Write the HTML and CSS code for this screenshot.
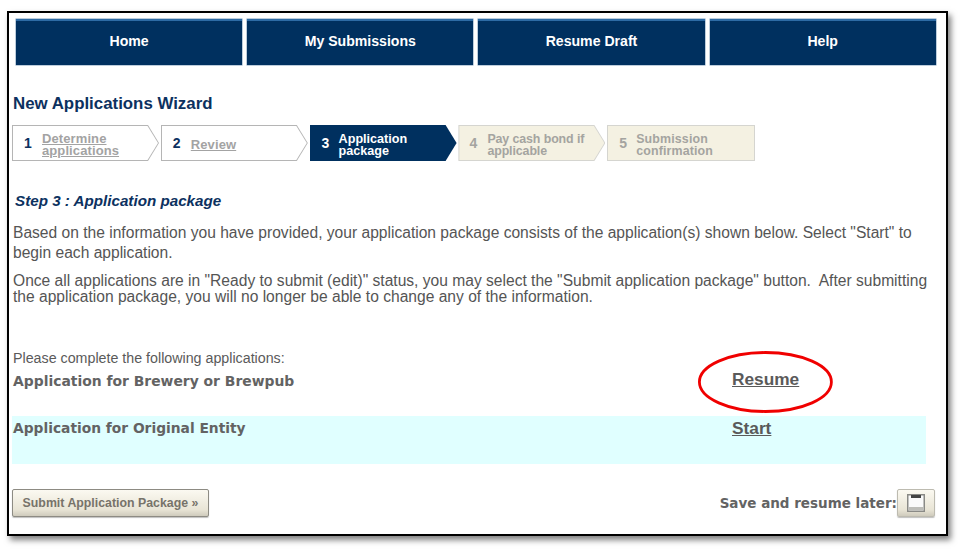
FILE: index.html
```html
<!DOCTYPE html>
<html lang="en">
<head>
<meta charset="utf-8">
<title>New Applications Wizard</title>
<link rel="stylesheet" href="styles.css">
</head>
<body>
<div class="frame">
  <nav class="nav">
    <a class="nav-item">Home</a>
    <a class="nav-item">My Submissions</a>
    <a class="nav-item">Resume Draft</a>
    <a class="nav-item">Help</a>
  </nav>
  <h1 class="title">New Applications Wizard</h1>
  <ol class="steps">
    <li class="step step-done"><div class="step-in"><span class="num">1</span><a class="label">Determine applications</a></div></li>
    <li class="step step-done"><div class="step-in"><span class="num">2</span><a class="label">Review</a></div></li>
    <li class="step step-current"><div class="step-in"><span class="num">3</span><span class="label">Application<br>package</span></div></li>
    <li class="step step-todo step-pay"><div class="step-in"><span class="num">4</span><span class="label">Pay cash bond if<br>applicable</span></div></li>
    <li class="step step-todo step-last"><div class="step-in"><span class="num">5</span><span class="label">Submission<br>confirmation</span></div></li>
  </ol>
  <h2 class="subtitle">Step 3 : Application package</h2>
  <p class="para para-a">Based on the information you have provided, your application package consists of the application(s) shown below. Select "Start" to begin each application.</p>
  <p class="para para-b">Once all applications are in "Ready to submit (edit)" status, you may select the "Submit application package" button.&nbsp; After submitting the application package, you will no longer be able to change any of the information.</p>
  <p class="lead">Please complete the following applications:</p>
  <div class="app-row">
    <span class="app-name">Application for Brewery or Brewpub</span>
    <a class="app-link">Resume</a>
  </div>
  <div class="app-row app-row-alt">
    <span class="app-name">Application for Original Entity</span>
    <a class="app-link">Start</a>
  </div>
  <div class="actions">
    <button class="btn btn-submit" type="button">Submit Application Package »</button>
    <div class="save">
      <span class="save-text">Save and resume later:</span>
      <button class="btn btn-save" type="button" aria-label="Save">
        <svg width="18" height="18" viewBox="0 0 18 18"><rect x="0.75" y="0.75" width="16.5" height="16.5" fill="#fafafa" stroke="#8a8a86" stroke-width="1.5"/><rect x="4" y="1" width="10" height="3" fill="#444"/><rect x="1.5" y="13" width="15" height="3.5" fill="#bdbdb8"/></svg>
      </button>
    </div>
  </div>
  <svg class="circle" width="138" height="64" viewBox="0 0 138 64"><ellipse cx="68.4" cy="32" rx="66" ry="29.5" fill="none" stroke="#f00000" stroke-width="2.8"/></svg>
</div>
</body>
</html>
```
FILE: styles.css
```css
* { box-sizing: border-box; }
html, body { margin: 0; padding: 0; background: #fff; }
body { width: 965px; height: 550px; overflow: hidden; font-family: "Liberation Sans", Arial, sans-serif; color: #5a5a5a; }

.frame {
  position: relative;
  width: 941px;
  height: 525px;
  margin: 11px 0 0 7px;
  padding: 6px 11px 0 4px;
  border: 2px solid #000;
  background: #fff;
  box-shadow: 3px 4px 6px rgba(0,0,0,.5);
}

.nav { display: flex; gap: 5px; margin-left: 3px; }
.nav-item {
  flex: none;
  width: 226.2px;
  height: 46px;
  display: flex;
  align-items: center;
  justify-content: center;
  padding-bottom: 4px;
  background: #00305f;
  border-top: 2px solid #2d6ba5;
  color: #fff;
  font-size: 14.1px;
  font-weight: bold;
  box-shadow: 0 0 0 .5px #7d9cba;
}

.title { margin: 30px 0 0 0; font-size: 16.85px; line-height: 18px; font-weight: bold; color: #0c3160; }

.steps { display: flex; list-style: none; margin: 12px 0 0 -1px; padding: 0; gap: 1.8px; }
.step { width: 147px; height: 36px; padding: 1px; background: #b5b5b5; clip-path: polygon(0 0, 136px 0, 100% 50%, 136px 100%, 0 100%); }
.step-in { height: 100%; display: flex; align-items: center; background: #fff; clip-path: polygon(0 0, 134.5px 0, 100% 50%, 134.5px 100%, 0 100%); }
.num { width: 29px; padding-left: 11px; font-size: 14px; font-weight: bold; color: #0c3160; flex: none; }
.label { padding-top: 3px; font-size: 12.6px; line-height: 12px; font-weight: bold; }
.step-done .label { font-size: 13px; letter-spacing: .1px; color: #a3a3a3; text-decoration: underline; }
.step-done:first-child .label { width: 90px; }
.step-current { background: #00305f; }
.step-current .step-in { background: #00305f; }
.step-current .num { color: #fff; }
.step-current .label { color: #fff; margin-left: -1px; }
.step-todo { background: #d5d5d0; }
.step-todo .step-in { background: #f4f1e2; }
.step-todo .num, .step-todo .label { color: #a4a4a0; }
.step-todo .label { font-size: 12.4px; letter-spacing: .15px; margin-left: -1px; }
.step-pay .num { padding-left: 10px; }
.step-pay .label { letter-spacing: -.1px; }
.step-last { width: 148px; clip-path: none; }
.step-last .step-in { clip-path: none; }

.subtitle { margin: 31px 0 0 2px; font-size: 15.2px; line-height: 18px; font-weight: bold; font-style: italic; color: #0c3160; }

.para { margin: 0; font-size: 15.6px; color: #555; }
.para-a { margin-top: 13px; line-height: 20px; }
.para-b { margin-top: 10px; line-height: 16px; }

.lead { margin: 46px 0 0; font-size: 14.25px; line-height: 14px; color: #5a5a5a; }

.app-row { display: flex; height: 51px; }
.app-row-alt { height: 48px; margin: 0 9px 0 -1px; padding-left: 1px; background: #e0ffff; }
.app-name { width: 719px; margin-top: 9px; font-family: "DejaVu Sans", sans-serif; font-size: 13.9px; line-height: 15px; font-weight: bold; color: #636363; }
.app-row-alt .app-name { margin-top: 5px; font-size: 13.8px; }
.app-link { margin-top: 5px; font-size: 17.3px; line-height: 18px; font-weight: bold; color: #5a5a5a; text-decoration: underline; }
.app-row-alt .app-link { margin-top: 3px; }

.actions { display: flex; justify-content: space-between; align-items: center; margin: 25px 0 0 -1px; }
.btn {
  border: 1px solid #8d8b83;
  border-radius: 2px;
  background: linear-gradient(#fbf9f1, #e9e5d6 75%, #cfcbbd);
  box-shadow: 0 1px 1px rgba(0,0,0,.25);
  font-family: "Liberation Sans", Arial, sans-serif;
}
.btn-submit { width: 197px; height: 28px; padding: 0; font-size: 12.35px; font-weight: bold; color: #77736a; }
.save { display: flex; align-items: center; }
.save-text { font-family: "DejaVu Sans", sans-serif; font-size: 13.5px; font-weight: bold; color: #636363; }
.btn-save { width: 38px; height: 28px; padding: 0; display: flex; align-items: center; justify-content: center; border-color: #bdbbb0; }
.btn-save svg { display: block; }

.circle { position: absolute; left: 688px; top: 337px; }
```
